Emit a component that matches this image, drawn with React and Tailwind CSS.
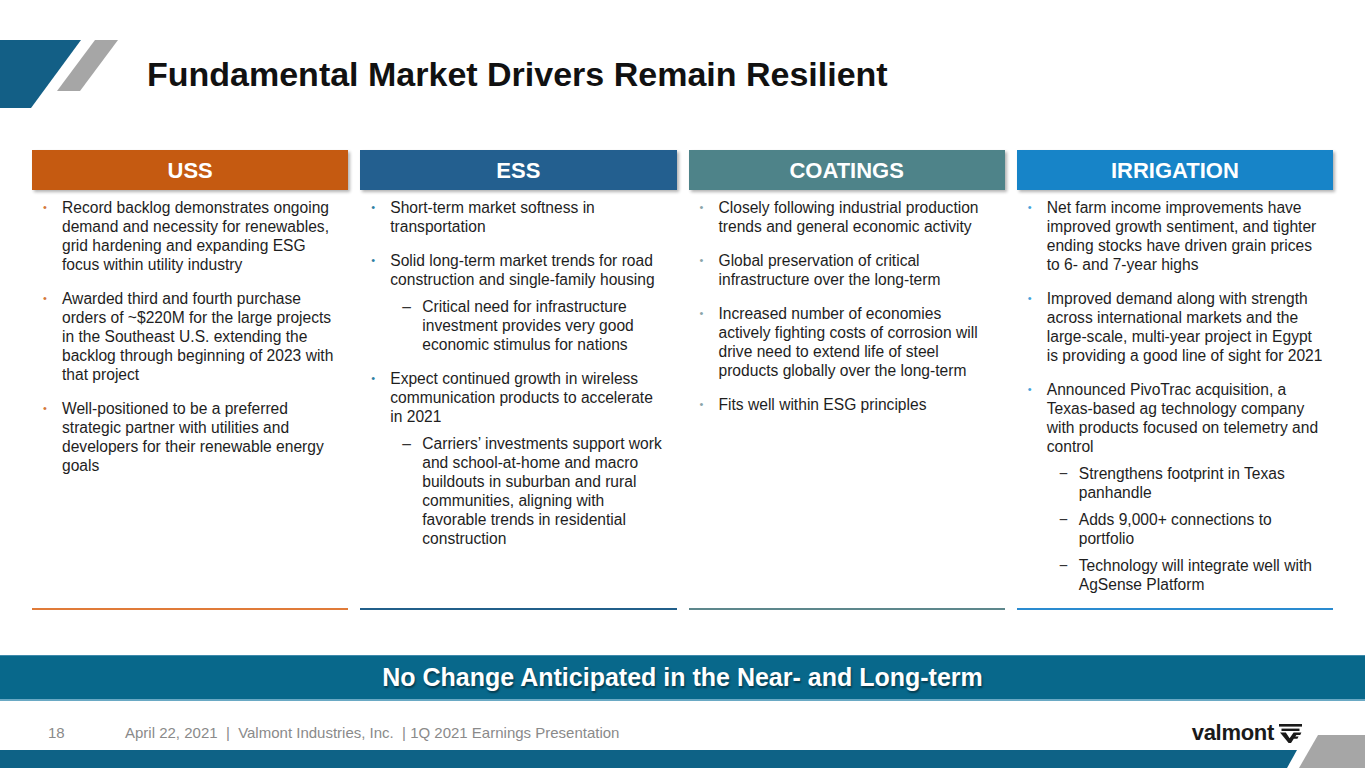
const columns = [
  {
    title: 'USS',
    head: 'bg-[#c55a11]',
    dot: 'text-[#d4773a]',
    line: 'border-[#e07b39]',
    items: [
      { text: 'Record backlog demonstrates ongoing demand and necessity for renewables, grid hardening and expanding ESG focus within utility industry' },
      { text: 'Awarded third and fourth purchase orders of ~$220M for the large projects in the Southeast U.S. extending the backlog through beginning of 2023 with that project' },
      { text: 'Well-positioned to be a preferred strategic partner with utilities and developers for their renewable energy goals' },
    ],
  },
  {
    title: 'ESS',
    head: 'bg-[#235f8f]',
    dot: 'text-[#2f7fa3]',
    line: 'border-[#215f8a]',
    dash: '–',
    items: [
      { text: 'Short-term market softness in transportation' },
      {
        text: 'Solid long-term market trends for road construction and single-family housing',
        subs: ['Critical need for infrastructure investment provides very good economic stimulus for nations'],
      },
      {
        text: 'Expect continued growth in wireless communication products to accelerate in 2021',
        subs: [
          'Carriers’ investments support work and school-at-home and macro buildouts in suburban and rural communities, aligning with favorable trends in residential construction',
        ],
      },
    ],
  },
  {
    title: 'COATINGS',
    head: 'bg-[#4e8389]',
    dot: 'text-[#8aa5a9]',
    line: 'border-[#5d878c]',
    items: [
      { text: 'Closely following industrial production trends and general economic activity' },
      { text: 'Global preservation of critical infrastructure over the long-term' },
      { text: 'Increased number of economies actively fighting costs of corrosion will drive need to extend life of steel products globally over the long-term' },
      { text: 'Fits well within ESG principles' },
    ],
  },
  {
    title: 'IRRIGATION',
    head: 'bg-[#1784c8]',
    dot: 'text-[#44a3dc]',
    line: 'border-[#2a8bd0]',
    dash: '−',
    items: [
      { text: 'Net farm income improvements have improved growth sentiment, and tighter ending stocks have driven grain prices to 6- and 7-year highs' },
      { text: 'Improved demand along with strength across international markets and the large-scale, multi-year project in Egypt is providing a good line of sight for 2021' },
      {
        text: 'Announced PivoTrac acquisition, a Texas-based ag technology company with products focused on telemetry and control',
        subs: [
          'Strengthens footprint in Texas panhandle',
          'Adds 9,000+ connections to portfolio',
          'Technology will integrate well with AgSense Platform',
        ],
      },
    ],
  },
];

// valmont "V" mark: two bars over a V with an F-like right arm
function ValmontMark() {
  return (
    <svg width="23" height="19" viewBox="0 0 23 19" aria-hidden>
      <rect x="0" y="0" width="23" height="2.6" fill="#1a1a1a" />
      <rect x="2.5" y="4.6" width="18" height="2.4" fill="#1a1a1a" />
      <polygon
        points="1,8.6 6.8,8.6 10.6,14.2 14.6,8.6 22.4,8.6 21.2,11 17.4,11 16.3,12.6 19.6,12.6 18.4,14.8 14.8,14.8 12,19 9.6,19"
        fill="#1a1a1a"
      />
    </svg>
  );
}

function Column({ col }) {
  return (
    <div className={`flex flex-col h-[460px] border-b-2 ${col.line}`}>
      <div
        className={`h-[40px] flex items-center justify-center text-white font-bold text-[22px] shadow-[2px_2px_3px_rgba(0,0,0,0.3)] ${col.head}`}
      >
        {col.title}
      </div>
      <ul className="pt-[8px] pl-[11px] pr-[9px] text-[15.6px] leading-[19px] text-[#1e1e1e]">
        {col.items.map((it, i) => (
          <li key={i} className={i > 0 ? 'mt-[15px]' : ''}>
            <div className="flex">
              <span className={`w-[19px] shrink-0 text-[11px] ${col.dot}`}>•</span>
              <span>{it.text}</span>
            </div>
            {it.subs &&
              it.subs.map((s, j) => (
                <div key={j} className="flex mt-[8px] ml-[31px]">
                  <span className="w-[20px] shrink-0 text-[#333]">{col.dash}</span>
                  <span>{s}</span>
                </div>
              ))}
          </li>
        ))}
      </ul>
    </div>
  );
}

export default function App() {
  return (
    <div className="relative w-[1365px] h-[768px] overflow-hidden bg-white font-['Liberation_Sans',Arial,sans-serif]">
      <header className="flex items-center pt-[40px] h-[108px]">
        <svg width="118" height="68" viewBox="0 0 118 68" aria-hidden>
          <polygon points="0,0 81,0 31,68 0,68" fill="#135f86" />
          <polygon points="95,0 118,0 80,51 57,51" fill="#a6a6a6" />
        </svg>
        <h1 className="ml-[29px] text-[34px] font-bold leading-none text-[#111]">
          Fundamental Market Drivers Remain Resilient
        </h1>
      </header>

      <section className="mt-[42px] px-[32px] grid grid-cols-4 gap-x-[12px]">
        {columns.map((c) => (
          <Column key={c.title} col={c} />
        ))}
      </section>

      <div className="mt-[45px] h-[46px] bg-[#08688b] border-t border-[#3f8aab] border-b-2 border-b-[#6aa9c4] flex items-center justify-center">
        <span className="text-white font-bold text-[25px] [text-shadow:1px_2px_2px_rgba(0,0,0,0.45)]">
          No Change Anticipated in the Near- and Long-term
        </span>
      </div>

      <footer className="h-[49px] pt-[15px] flex items-center justify-between pr-[63px] text-[#8a8a8a] text-[15px]">
        <div className="flex items-center">
          <span className="w-[125px] pl-[48px]">18</span>
          <span>April 22, 2021&nbsp;&nbsp;|&nbsp;&nbsp;Valmont Industries, Inc.&nbsp;&nbsp;| 1Q 2021 Earnings Presentation</span>
        </div>
        <div className="flex items-center gap-[5px]">
          <span className="text-[22px] font-bold leading-none tracking-[-0.3px] text-[#1a1a1a]">valmont</span>
          <ValmontMark />
        </div>
      </footer>

      <div className="h-[18px] w-[1297px] bg-[#0e6286] [clip-path:polygon(0_0,100%_0,calc(100%-10px)_100%,0_100%)]" />

      <svg className="absolute right-0 bottom-0" width="66" height="33" viewBox="0 0 66 33" aria-hidden>
        <polygon points="19,0 66,0 66,33 0,33" fill="#a6a6a6" />
      </svg>
    </div>
  );
}
